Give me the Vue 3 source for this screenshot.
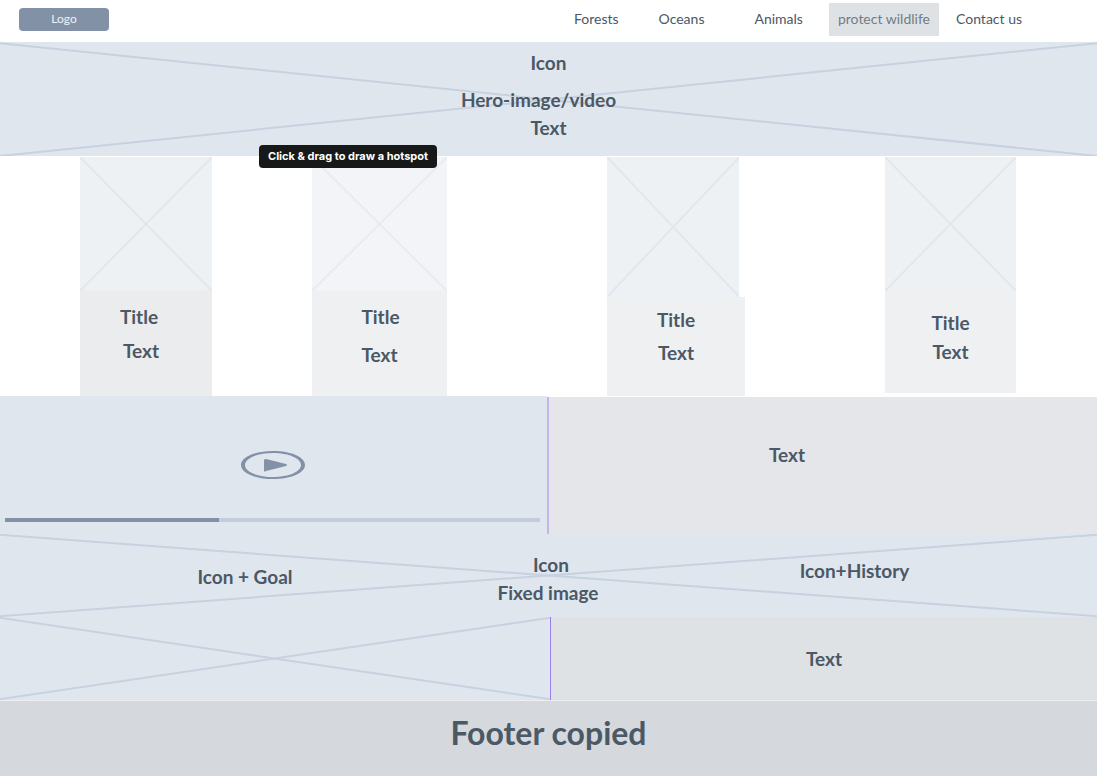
<script setup>
import { ref } from 'vue'

const progress = ref(40)
const links = [
  { label: 'Forests', cls: 'forests' },
  { label: 'Oceans', cls: 'oceans' },
  { label: 'Animals', cls: 'animals' },
  { label: 'protect wildlife', cls: 'protect' },
  { label: 'Contact us', cls: 'contact' },
]
const cards = ['first', 'second', 'third', 'fourth']
</script>

<template>
  <div class="page">
    <header class="top">
      <a class="logo" href="#">Logo</a>
      <nav class="nav" aria-label="Main">
        <a v-for="l in links" :key="l.cls" href="#" :class="l.cls">{{ l.label }}</a>
      </nav>
    </header>

    <section class="band hero">
      <svg class="cross" viewBox="0 0 100 100" preserveAspectRatio="none" aria-hidden="true">
        <path d="M0 1L100 100M0 100L100 1" />
      </svg>
      <p class="hero-icon">Icon</p>
      <h1 class="hero-title">Hero-image/video</h1>
      <p>Text</p>
      <div class="tooltip" role="tooltip">Click &amp; drag to draw a hotspot</div>
    </section>

    <section class="cards">
      <article v-for="c in cards" :key="c" class="card" :class="c">
        <div class="thumb">
          <svg class="cross" viewBox="0 0 100 100" preserveAspectRatio="none" aria-hidden="true">
            <path d="M0 0L100 100M0 100L100 0" />
          </svg>
        </div>
        <div class="body">
          <h2>Title</h2>
          <p>Text</p>
        </div>
      </article>
    </section>

    <section class="media">
      <div class="video">
        <button class="play" type="button" aria-label="Play">
          <svg viewBox="0 0 64 28" aria-hidden="true">
            <path fill-rule="evenodd" d="M32 0C50 0 64 6 64 14S50 28 32 28 0 22 0 14 14 0 32 0ZM32 2C17 2 4 7 4 14S17 26 32 26 60 21 60 14 47 2 32 2Z" />
            <path d="M23 9Q23 8 25 8L45 13Q47 14 45 15L25 20Q23 21 23 20Z" />
          </svg>
        </button>
        <input v-model="progress" class="seek" type="range" min="0" max="100" aria-label="Video position" :style="{ '--played': progress + '%' }">
      </div>
      <div class="media-text"><p>Text</p></div>
    </section>

    <section class="band fixed">
      <svg class="cross" viewBox="0 0 100 100" preserveAspectRatio="none" aria-hidden="true">
        <path d="M0 1L100 99M0 99L100 1" />
      </svg>
      <p class="goal">Icon + Goal</p>
      <div class="middle">
        <p class="middle-icon">Icon</p>
        <p>Fixed image</p>
      </div>
      <p class="history">Icon+History</p>
    </section>

    <section class="lower">
      <div class="band picture">
        <svg class="cross" viewBox="0 0 100 100" preserveAspectRatio="none" aria-hidden="true">
          <path d="M0 1L100 99M0 99L100 1" />
        </svg>
      </div>
      <div class="lower-text"><p>Text</p></div>
    </section>

    <footer class="footer">Footer copied</footer>
  </div>
</template>

<style>
body {
  margin: 0;
  background: #fff;
}
</style>

<style scoped>
.page {
  display: flex;
  flex-direction: column;
  min-height: 100vh;
  font: 700 19px/24px Lato, "Open Sans", sans-serif;
  color: #4b5866;
}
p, h1, h2 {
  margin: 0;
  font: inherit;
}
a {
  color: inherit;
  text-decoration: none;
}
.top {
  display: flex;
  align-items: flex-start;
  justify-content: space-between;
  box-sizing: border-box;
  height: 42px;
  padding: 3px 75px 0 19px;
  font-weight: 400;
  font-size: 14px;
}
.logo {
  width: 90px;
  margin-top: 5px;
  padding-bottom: 2px;
  border-radius: 4px;
  background: #8391a7;
  color: #eef2f7;
  font-size: 12px;
  line-height: 21px;
  text-align: center;
}
.nav {
  display: flex;
  line-height: 31px;
}
.nav a { padding-bottom: 2px; }
.oceans { margin-left: 40px; }
.animals { margin-left: 50px; }
.nav .protect {
  margin: 0 17px 0 26px;
  padding: 0 9px 2px;
  background: #dee2e5;
  color: #727c88;
}
.band {
  position: relative;
  background: #dfe6ee;
}
.cross {
  position: absolute;
  inset: 0;
  width: 100%;
  height: 100%;
  fill: none;
  stroke: #c8d1df;
  stroke-width: 2px;
}
.cross path { vector-effect: non-scaling-stroke; }
.band p, .band h1 { position: relative; }
.hero {
  box-sizing: border-box;
  height: 114px;
  padding-top: 9px;
  text-align: center;
}
.hero-icon { margin-bottom: 13px; }
.hero-title {
  margin-bottom: 4px;
  padding-right: 20px;
}
.tooltip {
  position: absolute;
  z-index: 2;
  top: 103px;
  left: 259px;
  padding: 0 9px;
  border-radius: 4px;
  background: #171918;
  color: #fff;
  font: 700 11px/23px Inter, sans-serif;
  white-space: nowrap;
}
.cards {
  display: grid;
  grid-template-columns: 80fr 132fr 100fr 135fr 160fr 138fr 140fr 131fr 81fr;
  height: 240px;
  padding-top: 1px;
  box-sizing: border-box;
}
.card {
  display: flex;
  flex-direction: column;
  text-align: center;
}
.first { grid-column: 2; }
.second { grid-column: 4; }
.third { grid-column: 6; }
.fourth {
  grid-column: 8;
  margin-bottom: 3px;
}
.thumb {
  position: relative;
  height: 134px;
  background: #edf1f4;
}
.thumb .cross { stroke: #e2e7ed; }
.body {
  flex: 1;
  background: #eff0f2;
}
.first .body {
  padding: 14px 14px 0 0;
  background: #ebecee;
}
.first h2 { margin-bottom: 10px; }
.first p { padding-left: 4px; }
.second .thumb { background: #f2f4f8; }
.second .cross { stroke: #e8ecf0; }
.second .body { padding-top: 14px; }
.second h2 { margin-bottom: 14px; }
.second h2 { padding-left: 2px; }
.third .thumb {
  width: 96%;
  height: 140px;
}
.third .body { padding-top: 11px; }
.third h2 { margin-bottom: 9px; }
.fourth .body { padding-top: 20px; }
.fourth h2 { margin-bottom: 5px; }
.media {
  display: grid;
  grid-template-columns: 547fr 550fr;
  height: 138px;
}
.video {
  display: flex;
  flex-direction: column;
  align-items: center;
  justify-content: space-between;
  padding: 55px 7px 12px 5px;
  background: #dfe6ee;
}
.play {
  width: 64px;
  height: 28px;
  padding: 0;
  border: 0;
  background: none;
  cursor: pointer;
}
.play svg {
  display: block;
  fill: #8391a7;
}
.seek {
  appearance: none;
  width: 100%;
  height: 4px;
  margin: 0;
  background: linear-gradient(to right, #8391a7 var(--played), #c2ccdb var(--played));
}
.seek::-webkit-slider-thumb {
  appearance: none;
  width: 4px;
  height: 4px;
  background: transparent;
}
.media-text {
  margin-top: 1px;
  padding: 46px 72px 0 0;
  border-left: 2px solid #c2b4ec;
  background: #e5e6ea;
  text-align: center;
}
.fixed {
  display: grid;
  grid-template-columns: 490fr 116fr 491fr;
  height: 83px;
  text-align: center;
}
.goal { padding-top: 31px; }
.middle {
  padding-top: 19px;
  white-space: nowrap;
}
.middle-icon {
  margin-bottom: 4px;
  padding-left: 6px;
}
.history { padding: 25px 0 0 6px; }
.lower {
  display: grid;
  grid-template-columns: 550fr 547fr;
  height: 83px;
}
.lower-text {
  padding-top: 30px;
  border-left: 1px solid #9d80ee;
  background: #dee2e5;
  text-align: center;
}
.footer {
  flex: 1;
  padding: 12px 0 24px;
  border-top: 1px solid #eceef1;
  background: #d5d8dd;
  font-size: 32px;
  line-height: 40px;
  text-align: center;
}
</style>
